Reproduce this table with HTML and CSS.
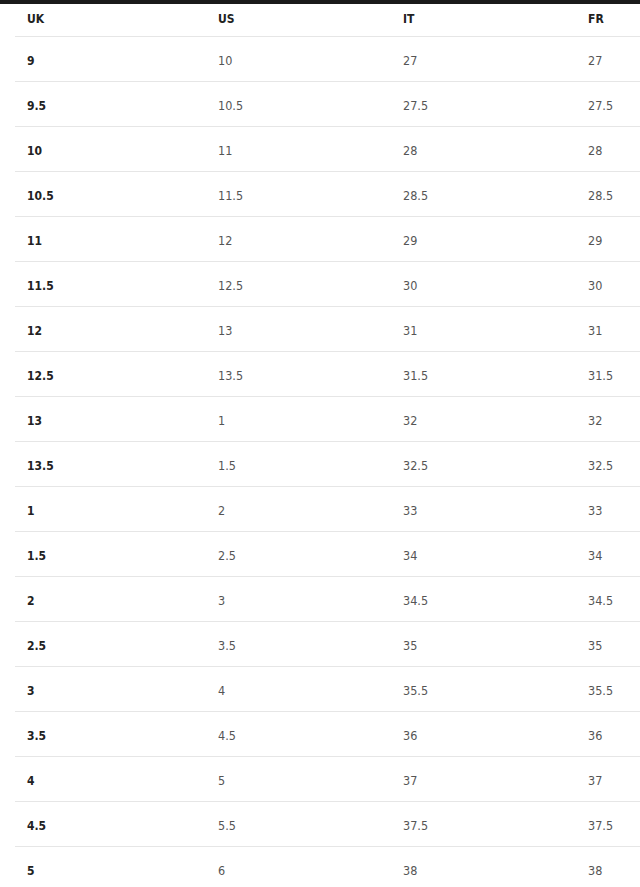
FILE: index.html
```html
<!DOCTYPE html>
<html>
<head>
<meta charset="utf-8">
<link rel="stylesheet" href="styles.css">
</head>
<body>
<div class="topbar"></div>
<div class="table">
  <div class="row head"><span>UK</span><span>US</span><span>IT</span><span>FR</span></div>
  <div class="row"><span class="uk">9</span><span>10</span><span>27</span><span>27</span></div>
  <div class="row"><span class="uk">9.5</span><span>10.5</span><span>27.5</span><span>27.5</span></div>
  <div class="row"><span class="uk">10</span><span>11</span><span>28</span><span>28</span></div>
  <div class="row"><span class="uk">10.5</span><span>11.5</span><span>28.5</span><span>28.5</span></div>
  <div class="row"><span class="uk">11</span><span>12</span><span>29</span><span>29</span></div>
  <div class="row"><span class="uk">11.5</span><span>12.5</span><span>30</span><span>30</span></div>
  <div class="row"><span class="uk">12</span><span>13</span><span>31</span><span>31</span></div>
  <div class="row"><span class="uk">12.5</span><span>13.5</span><span>31.5</span><span>31.5</span></div>
  <div class="row"><span class="uk">13</span><span>1</span><span>32</span><span>32</span></div>
  <div class="row"><span class="uk">13.5</span><span>1.5</span><span>32.5</span><span>32.5</span></div>
  <div class="row"><span class="uk">1</span><span>2</span><span>33</span><span>33</span></div>
  <div class="row"><span class="uk">1.5</span><span>2.5</span><span>34</span><span>34</span></div>
  <div class="row"><span class="uk">2</span><span>3</span><span>34.5</span><span>34.5</span></div>
  <div class="row"><span class="uk">2.5</span><span>3.5</span><span>35</span><span>35</span></div>
  <div class="row"><span class="uk">3</span><span>4</span><span>35.5</span><span>35.5</span></div>
  <div class="row"><span class="uk">3.5</span><span>4.5</span><span>36</span><span>36</span></div>
  <div class="row"><span class="uk">4</span><span>5</span><span>37</span><span>37</span></div>
  <div class="row"><span class="uk">4.5</span><span>5.5</span><span>37.5</span><span>37.5</span></div>
  <div class="row"><span class="uk">5</span><span>6</span><span>38</span><span>38</span></div>
</div>
</body>
</html>
```
FILE: styles.css
```css
html, body {
  margin: 0;
  padding: 0;
  background: #fff;
  overflow: hidden;
}
body {
  font-family: "DejaVu Sans Condensed", "Liberation Sans Narrow", "Liberation Sans", sans-serif;
  font-size: 12.5px;
  color: #555;
}
.topbar {
  height: 4px;
  background: #1a1a1a;
}
.table {
  margin-left: 15px;
  width: 625px;
}
.row {
  display: grid;
  grid-template-columns: 203px 185px 185px 1fr;
  align-items: center;
  height: 45px;
  padding-top: 3px;
  border-bottom: 1px solid #e6e6e6;
  box-sizing: border-box;
}
.row span:first-child {
  padding-left: 12px;
}
.row.head {
  height: 33px;
  font-size: 12px;
  font-weight: bold;
  color: #222;
  padding-top: 0;
  padding-bottom: 3px;
}
.uk {
  font-weight: bold;
  font-size: 12px;
  color: #222;
}
```
